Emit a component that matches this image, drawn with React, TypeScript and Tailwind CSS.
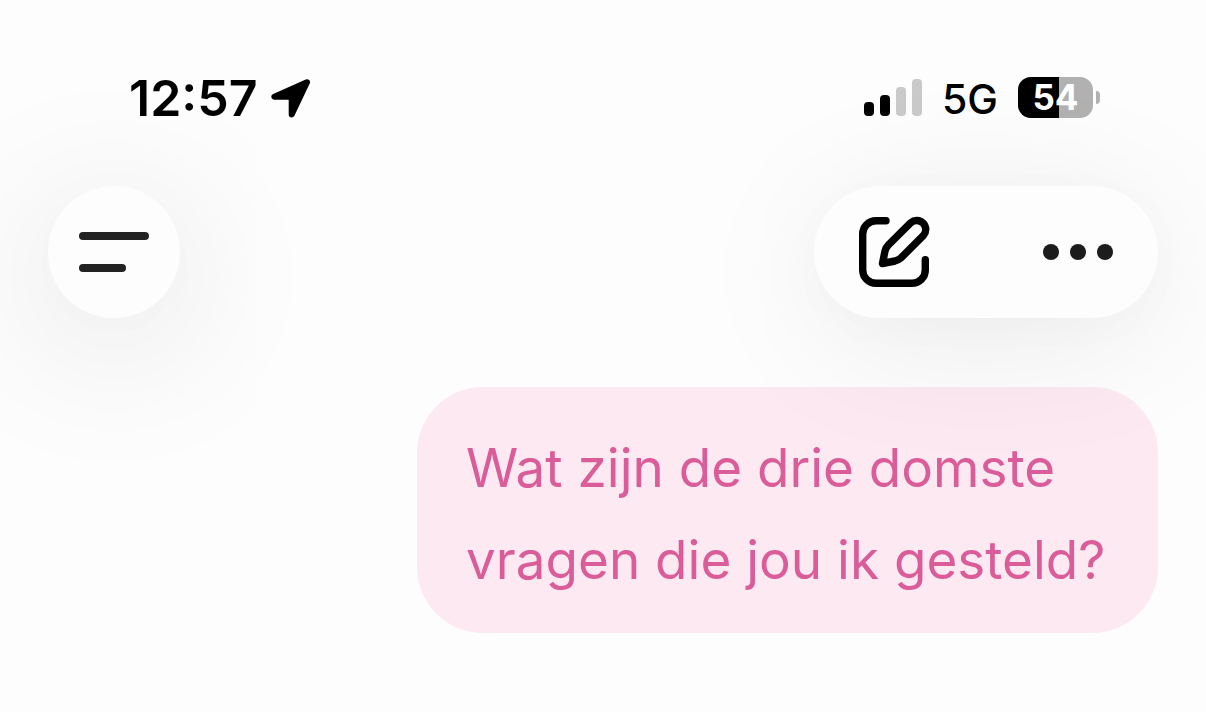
import React from 'react';

const signalBars = [
  { id: 1, className: 'h-[14px] bg-black' },
  { id: 2, className: 'h-[21px] bg-black' },
  { id: 3, className: 'h-[29px] bg-[#cacaca]' },
  { id: 4, className: 'h-[37px] bg-[#cacaca]' },
];

const LocationIcon: React.FC = () => (
  <svg width="40" height="39" viewBox="0 0 40 39" aria-hidden="true">
    <path d="M36 3.2L3.4 17.8H20.7V35.4Z" fill="#000" stroke="#000" strokeWidth="6" strokeLinejoin="round" />
  </svg>
);

const ComposeIcon: React.FC = () => (
  <svg
    width="70"
    height="70"
    viewBox="0 0 70 70"
    fill="none"
    stroke="#000"
    strokeWidth="7.4"
    strokeLinecap="round"
    strokeLinejoin="round"
    className="overflow-visible"
    aria-hidden="true"
  >
    <path d="M27 3.7H17A13.3 13.3 0 0 0 3.7 17V53A13.3 13.3 0 0 0 17 66.3H53A13.3 13.3 0 0 0 66.3 53V42.7" />
    <path d="M51.8 5.7A9 9 0 0 1 64.5 18.4L42 40.9Q39.5 43.2 36 44L23.5 46.5L26 34Q26.7 30.5 29.2 28.2Z" />
  </svg>
);

const Battery: React.FC<{ level: number }> = ({ level }) => (
  <div className="flex items-center gap-[3px]">
    <div className="relative h-[41px] w-[75px] overflow-hidden rounded-[13px] bg-[#b1b1b1]">
      <div className="h-full bg-black" style={{ width: `${level}%` }} />
      <span className="absolute inset-0 flex items-center justify-center text-[35px] leading-none font-bold text-white">
        {level}
      </span>
    </div>
    <div className="h-[13px] w-1 rounded-r-full bg-[#b1b1b1]" />
  </div>
);

const StatusBar: React.FC = () => (
  <div className="flex h-[52px] items-center justify-between pr-[106px] pl-[129px] text-black">
    <div className="flex items-center gap-[13px]">
      <span className="text-[50px] leading-none font-semibold">12:57</span>
      <LocationIcon />
    </div>
    <div className="flex items-center gap-5 pb-[2px]">
      <div className="flex items-end gap-[6px]">
        {signalBars.map((bar) => (
          <div key={bar.id} className={`w-[10px] rounded-[4px] ${bar.className}`} />
        ))}
      </div>
      <span className="pt-[5px] text-[41px] leading-none font-medium">5G</span>
      <Battery level={54} />
    </div>
  </div>
);

const Toolbar: React.FC = () => (
  <header className="relative z-10 flex items-center justify-between px-12">
    <button
      aria-label="Menu"
      className="flex size-[132px] flex-col justify-center gap-6 rounded-full bg-[#fdfdfd] pl-[31px] shadow-[0_24px_160px_rgba(0,0,0,0.13),0_8px_48px_rgba(0,0,0,0.01)]"
    >
      <span className="h-2 w-[70px] rounded-full bg-[#222]" />
      <span className="h-2 w-[47px] rounded-full bg-[#222]" />
    </button>
    <div className="flex h-[132px] w-[344px] items-center justify-between rounded-full bg-[#fdfdfd] px-[45px] shadow-[0_20px_144px_rgba(0,0,0,0.08),0_8px_48px_rgba(0,0,0,0.02)]">
      <button aria-label="Nieuwe chat">
        <ComposeIcon />
      </button>
      <button aria-label="Meer" className="flex h-[70px] items-center gap-[11px]">
        <span className="size-4 rounded-full bg-[#1c1c1c]" />
        <span className="size-4 rounded-full bg-[#1c1c1c]" />
        <span className="size-4 rounded-full bg-[#1c1c1c]" />
      </button>
    </div>
  </header>
);

const App: React.FC = () => {
  return (
    <div className="min-h-screen overflow-hidden bg-[#fdfdfd] pt-[72px] font-['Inter',sans-serif]">
      <StatusBar />
      <div className="pt-[62px]">
        <Toolbar />
      </div>
      <main className="flex justify-end px-12 pt-[69px]">
        <p className="w-[741px] rounded-[66px] bg-[#fde9f2] pt-[35px] pr-10 pb-[27px] pl-[49px] text-[53px] leading-[92px] text-[#da5c98]">
          Wat zijn de drie domste vragen die jou ik gesteld?
        </p>
      </main>
    </div>
  );
};

export default App;
